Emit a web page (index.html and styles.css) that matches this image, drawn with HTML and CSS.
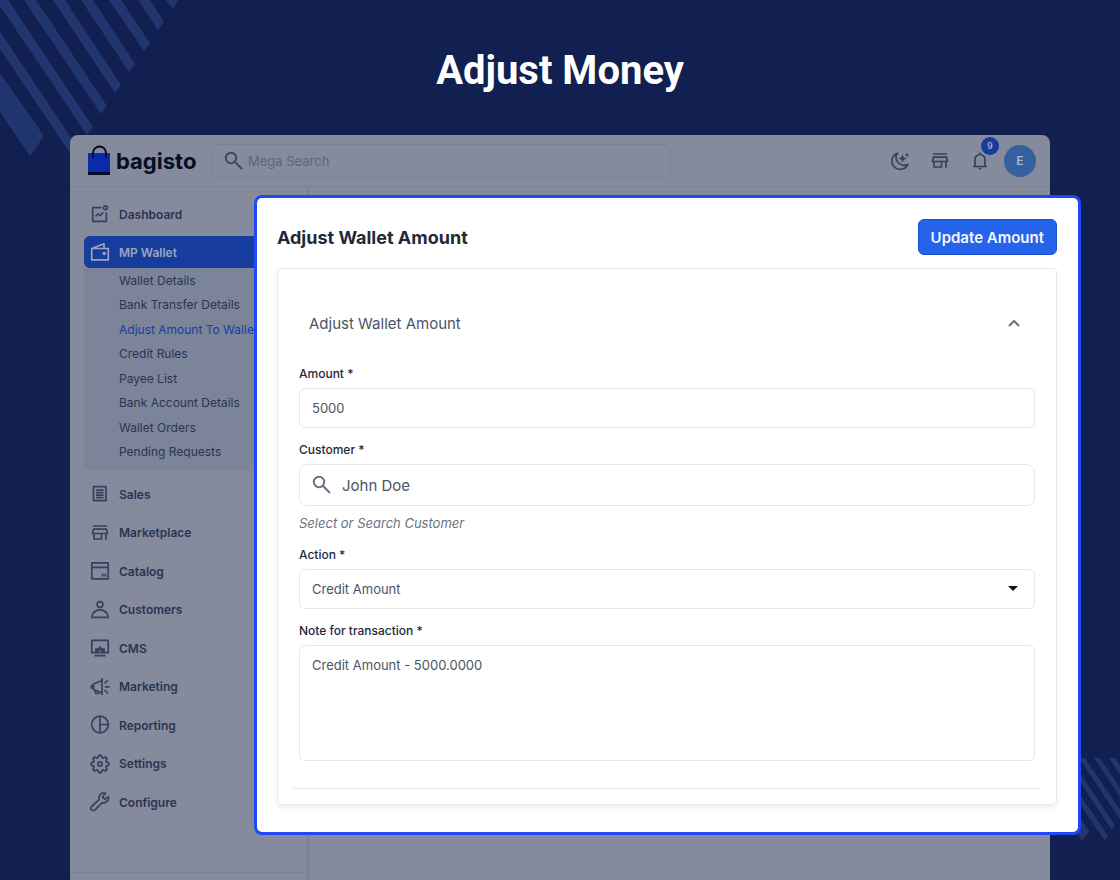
FILE: index.html
```html
<!DOCTYPE html>
<html lang="en">
<head>
    <meta charset="UTF-8">
    <meta name="viewport" content="width=device-width, initial-scale=1.0">
    <title>Adjust Money</title>
    <link rel="stylesheet" href="styles.css">
</head>
<body>
    <!-- Shared icons -->
    <svg class="sprite" aria-hidden="true">
        <symbol id="icon-search" viewBox="0 0 20 20">
            <circle cx="7" cy="7" r="5.2"/>
            <path d="M10.800 10.800L18 18"/>
        </symbol>
        <symbol id="icon-store" viewBox="0 0 22 22">
            <path d="M4 4h14M4.500 7.200h13l1 4.300h-15zM5 11.500V17h7.500v-5.500M17 11.500v6.300"/>
        </symbol>
    </svg>

    <svg class="stripes stripes-top" width="180" height="160" viewBox="0 0 180 160" aria-hidden="true">
        <path d="M0 73L44 136L30 156L0 112z"/>
        <path d="M-33 0h12L78 148L72 156z"/>
        <path d="M-4 0h12L93 127L87 135z"/>
        <path d="M24 0h12L107 106L101 114z"/>
        <path d="M53 0h12L121 85L115 93z"/>
        <path d="M81 0h12L135 64L129 72z"/>
        <path d="M109 0h12L150 43L144 51z"/>
        <path d="M138 0h12L164 22L158 30z"/>
        <path d="M166 0h12L173 9z"/>
    </svg>
    <svg class="stripes stripes-bottom" width="50" height="84" viewBox="0 0 50 84" aria-hidden="true">
        <path d="M0 44L19 73L12 83L0 66z"/>
        <path d="M-21 0h6L38 78L35 83z"/>
        <path d="M-6 0h6L45 67L42 72z"/>
        <path d="M9 0h6L52 55L49 60z"/>
        <path d="M24 0h6L58 42v9z"/>
        <path d="M39 0h6L58 19v9z"/>
    </svg>

    <h1 class="page-title">Adjust Money</h1>

    <div class="window">
        <header class="topbar">
            <a href="#" class="logo">
                <svg width="24" height="32" viewBox="0 0 24 32" aria-hidden="true">
                    <path fill="#0a2aa8" d="M0 8h22v19H0z"/>
                    <path fill="#050d24" d="M0 27h22v3H0z"/>
                    <path fill="none" stroke="#050d24" stroke-width="2" stroke-linecap="round" d="M5 12V8a6.500 6.500 0 0 1 13 0v4"/>
                </svg>
                <span>bagisto</span>
            </a>
            <label class="mega-search">
                <svg class="icon"><use href="#icon-search"/></svg>
                <input type="text" placeholder="Mega Search" aria-label="Mega Search">
            </label>
            <div class="tools">
                <button class="tool" aria-label="Dark mode">
                    <svg class="icon" viewBox="0 0 22 22">
                        <path d="M8.500 3.200A8.300 8.300 0 1 0 18.800 14.300A7.800 7.800 0 0 1 8.500 3.200z"/>
                        <path class="solid" d="M13.500 4.500l1.300 2.700l2.700 1.300l-2.700 1.300l-1.300 2.700l-1.300-2.700l-2.700-1.300l2.700-1.300zM18 2.800l.7 1.500l1.500.7l-1.500.7l-.7 1.500l-.7-1.500l-1.500-.7l1.500-.7z"/>
                    </svg>
                </button>
                <button class="tool" aria-label="Visit shop">
                    <svg class="icon"><use href="#icon-store"/></svg>
                </button>
                <button class="tool" aria-label="Notifications">
                    <svg class="icon" viewBox="0 0 22 22">
                        <path d="M4 16.500h14M6 16.500V9.500a5 5 0 0 1 10 0v7M11 4.500V2.500"/>
                        <path class="solid" d="M9.300 17.800h3.400a1.700 1.700 0 0 1-3.400 0z"/>
                    </svg>
                    <span class="badge">9</span>
                </button>
                <button class="avatar">E</button>
            </div>
        </header>

        <nav class="sidebar">
            <a href="#" class="nav-item">
                <svg class="icon" viewBox="0 0 22 22"><path d="M12.500 4.700H3.700v13.600h13.600V9.500M6.500 13.500l2.500-2.700l2.300 1.800l3-3.300"/><circle cx="16.500" cy="4.700" r="1.900"/></svg>
                Dashboard
            </a>
            <a href="#" class="nav-item active">
                <svg class="icon" viewBox="0 0 22 22"><path d="M2.700 7.500h16.600v11.300H2.700zM3.500 7.300L15 2.800v4.500"/><circle class="solid" cx="15.200" cy="12.500" r="1.700"/></svg>
                MP Wallet
            </a>
            <div class="submenu">
                <a href="#">Wallet Details</a>
                <a href="#">Bank Transfer Details</a>
                <a href="#" class="current">Adjust Amount To Wallet</a>
                <a href="#">Credit Rules</a>
                <a href="#">Payee List</a>
                <a href="#">Bank Account Details</a>
                <a href="#">Wallet Orders</a>
                <a href="#">Pending Requests</a>
            </div>
            <div class="nav-group">
                <a href="#" class="nav-item">
                    <svg class="icon" viewBox="0 0 22 22"><path d="M4.500 3.700h12.500v14H4.500zM7 7.200h7.500M7 9.700h7.500M7 12.200h7.500M7 14.700h7.500"/></svg>
                    Sales
                </a>
                <a href="#" class="nav-item">
                    <svg class="icon"><use href="#icon-store"/></svg>
                    Marketplace
                </a>
                <a href="#" class="nav-item">
                    <svg class="icon" viewBox="0 0 22 22"><path d="M2.800 2.800h16.400v16H2.800zM2.800 7.300h16.400M13.700 13.500v3M16.300 13.500v3"/></svg>
                    Catalog
                </a>
                <a href="#" class="nav-item">
                    <svg class="icon" viewBox="0 0 22 22"><circle cx="11" cy="5.500" r="2.900"/><path d="M2.800 18.300a8.200 7.500 0 0 1 16.400 0z"/></svg>
                    Customers
                </a>
                <a href="#" class="nav-item">
                    <svg class="icon" viewBox="0 0 22 22"><path d="M2.800 3.300h16.400v12.400H2.800zM5.500 18.700h11"/><path class="solid" d="M6 15v-3.500l3-.5l2-2l2 2l3 .5V15h-3.500a1.500 1.500 0 0 0-3 0z"/></svg>
                    CMS
                </a>
                <a href="#" class="nav-item">
                    <svg class="icon" viewBox="0 0 22 22"><path d="M13 2v17M13 4.500L4.500 8v5.500l8.500 3.500M5.500 14l1.500 3.500h2.500v-2M15.500 7.500L19 4M16 10.800h4.500M15.500 14L19 17.500"/><path class="solid" d="M4.800 8.200v5L1.500 12.500v-3.500z"/></svg>
                    Marketing
                </a>
                <a href="#" class="nav-item">
                    <svg class="icon" viewBox="0 0 22 22"><circle cx="11" cy="10.500" r="8.300"/><path d="M11 2.200v16.600M11 10.500h8.300"/></svg>
                    Reporting
                </a>
                <a href="#" class="nav-item">
                    <svg class="icon" viewBox="0 0 22 22"><path d="M9.700 2.300h2.600l.5 2.200l1.500.6l1.900-1.200l1.900 1.900l-1.200 1.900l.6 1.500l2.200.5v2.600l-2.200.5l-.6 1.500l1.200 1.900l-1.900 1.900l-1.900-1.200l-1.500.6l-.5 2.200H9.700l-.5-2.200l-1.500-.6l-1.900 1.200l-1.900-1.900l1.200-1.900l-.6-1.500l-2.200-.5V9.700l2.200-.5l.6-1.500l-1.200-1.900l1.900-1.900l1.900 1.200l1.500-.6z"/><circle cx="11" cy="11" r="2.200"/></svg>
                    Settings
                </a>
                <a href="#" class="nav-item">
                    <svg class="icon" viewBox="0 0 22 22"><path d="M16.500 2.300a5 5 0 0 0-6.400 6.400L2.600 15.500a2.200 2.200 0 0 0 3.400 3.300l7.200-7.200a5 5 0 0 0 6.300-6L15.800 8.300l-2.300-2.200z"/></svg>
                    Configure
                </a>
            </div>
            <div class="sidebar-footer"></div>
        </nav>

        <main class="modal">
            <div class="modal-header">
                <h2>Adjust Wallet Amount</h2>
                <button class="primary-button" type="submit" form="wallet-form">Update Amount</button>
            </div>
            <form class="card" id="wallet-form">
                <button class="accordion" type="button">
                    <span>Adjust Wallet Amount</span>
                    <svg width="12" height="8" viewBox="0 0 12 8" aria-hidden="true"><path d="M1 7l5-5l5 5"/></svg>
                </button>
                <div class="fields">
                    <div class="field">
                        <label for="amount">Amount *</label>
                        <input class="control" type="text" id="amount" value="5000">
                    </div>
                    <div class="field">
                        <label for="customer">Customer *</label>
                        <div class="search-control">
                            <svg class="icon" aria-hidden="true"><use href="#icon-search"/></svg>
                            <input type="text" id="customer" value="John Doe">
                        </div>
                        <p class="hint">Select or Search Customer</p>
                    </div>
                    <div class="field">
                        <label for="action">Action *</label>
                        <div class="select-wrap">
                            <select class="control" id="action">
                                <option>Credit Amount</option>
                                <option>Debit Amount</option>
                            </select>
                            <span class="caret"></span>
                        </div>
                    </div>
                    <div class="field">
                        <label for="note">Note for transaction *</label>
                        <textarea class="control" id="note">Credit Amount - 5000.0000</textarea>
                    </div>
                </div>
                <hr>
            </form>
        </main>
    </div>
</body>
</html>
```

FILE: styles.css
```css
* {
    margin: 0;
    padding: 0;
    box-sizing: border-box;
}

body {
    position: relative;
    display: flex;
    flex-direction: column;
    min-height: 100vh;
    background: #112050;
    font-family: Inter, 'Liberation Sans', sans-serif;
    font-size: 13px;
    color: #1f2937;
    overflow-x: hidden;
}

a {
    color: inherit;
    text-decoration: none;
}

button, input, select, textarea {
    font: inherit;
    color: inherit;
    background: none;
    border: 0;
    outline: 0;
}

button {
    cursor: pointer;
}

.sprite {
    position: absolute;
    width: 0;
    height: 0;
}

.icon {
    flex: none;
    width: 22px;
    height: 22px;
    fill: none;
    stroke: currentColor;
    stroke-width: 1.7;
    stroke-linejoin: round;
}

.icon .solid {
    fill: currentColor;
    stroke: none;
}

/* Background */
.stripes {
    position: absolute;
    fill: #21366f;
}

.stripes-top {
    top: 0;
    left: 0;
}

.stripes-bottom {
    right: 0;
    bottom: 38px;
}

.page-title {
    padding: 41px 16px 34px;
    font-family: Roboto, sans-serif;
    font-size: 40px;
    line-height: 60px;
    font-weight: 700;
    text-align: center;
    color: #fff;
}

/* Window */
.window {
    position: relative;
    display: flex;
    flex-direction: column;
    flex: 1;
    margin: 0 70px;
    background: #858a9d;
    border-radius: 8px 8px 0 0;
}

.topbar {
    display: flex;
    align-items: center;
    height: 52px;
    padding: 0 14px 0 18px;
    border-bottom: 1px solid #7b8297;
}

.logo {
    display: flex;
    align-items: center;
    gap: 4px;
    width: 124px;
    font-size: 22px;
    font-weight: 700;
    color: #050d24;
}

.mega-search {
    display: flex;
    align-items: center;
    gap: 4px;
    flex: 0 1 459px;
    height: 34px;
    padding: 0 11px;
    border: 1px solid #7b8297;
    border-radius: 7px;
    color: #3d4966;
}

.mega-search .icon,
.search-control .icon {
    width: 20px;
    height: 20px;
    stroke-width: 2;
}

.mega-search input {
    flex: 1;
    min-width: 0;
    font-size: 13px;
}

.mega-search input::placeholder {
    color: #5c6580;
}

.tools {
    display: flex;
    align-items: center;
    gap: 18px;
    margin-left: auto;
    color: #35415e;
}

.tool {
    position: relative;
    height: 22px;
}

.badge {
    position: absolute;
    top: -13px;
    right: -8px;
    width: 18px;
    height: 18px;
    border-radius: 50%;
    background: #163c9e;
    color: #a5abbf;
    font-size: 9px;
    line-height: 18px;
    font-weight: 600;
}

.avatar {
    width: 32px;
    height: 32px;
    margin-left: -5px;
    border-radius: 50%;
    background: #35609f;
    color: #a5b4cf;
    font-size: 12px;
    font-weight: 600;
}

/* Sidebar */
.sidebar {
    display: flex;
    flex-direction: column;
    flex: 1;
    width: 240px;
    padding-top: 11px;
    border-right: 3px solid #7d8398;
    font-size: 12px;
    color: #2a3553;
}

.nav-item {
    display: flex;
    align-items: center;
    gap: 8px;
    height: 32px;
    margin: 0 14px;
    padding: 0 5px;
    font-weight: 600;
}

.nav-item .icon {
    color: #35415e;
}

.nav-item.active {
    margin-top: 6px;
    border-radius: 6px;
    background: #163c9e;
    color: #9da4bb;
}

.nav-item.active .icon {
    color: #9da4bb;
}

.submenu {
    display: grid;
    grid-auto-rows: 1fr;
    align-items: center;
    height: 203px;
    margin: 0 14px;
    padding: 0 0 7px 35px;
    border-radius: 0 0 6px 6px;
    background: #7c849a;
    white-space: nowrap;
}

.submenu .current {
    color: #163c9e;
}

.nav-group {
    display: flex;
    flex-direction: column;
    justify-content: space-between;
    height: 340px;
    margin-top: 7px;
}

.sidebar-footer {
    height: 8px;
    margin-top: auto;
    border-top: 1px solid #7b8297;
}

/* Modal */
.modal {
    position: absolute;
    top: 60px;
    left: 184px;
    right: -31px;
    padding: 21px 21px 27px 20px;
    border: 3px solid #2148f5;
    border-radius: 8px;
    background: #fff;
}

.modal-header {
    display: flex;
    align-items: center;
    justify-content: space-between;
    margin-bottom: 13px;
}

.modal-header h2 {
    font-size: 18px;
    font-weight: 700;
}

.primary-button {
    height: 36px;
    padding: 0 12px;
    border: 1px solid #1d4fd0;
    border-radius: 6px;
    background: #2563eb;
    color: #f5f7fd;
    font-size: 15px;
    font-weight: 600;
}

.card {
    padding: 38px 15px 15px;
    border: 1px solid #e8e9ec;
    border-radius: 4px;
    box-shadow: 0 4px 6px rgba(0, 0, 0, 0.06);
}

.accordion {
    display: flex;
    align-items: center;
    justify-content: space-between;
    width: 100%;
    height: 32px;
    margin-bottom: 26px;
    padding: 0 21px 0 16px;
    font-size: 15px;
    color: #4b5563;
}

.accordion svg {
    fill: none;
    stroke: #6b7280;
    stroke-width: 2;
}

.fields {
    display: flex;
    flex-direction: column;
    gap: 13px;
    padding: 0 6px;
}

.field label {
    display: block;
    margin-bottom: 5px;
    font-size: 12px;
    line-height: 18px;
    font-weight: 500;
}

.control {
    display: block;
    width: 100%;
    height: 40px;
    padding: 0 12px;
    border: 1px solid #e5e7eb;
    border-radius: 6px;
    font-size: 13px;
    color: #4b5563;
}

textarea.control {
    height: 116px;
    padding: 9px 12px;
    line-height: 20px;
    resize: none;
}

.search-control {
    display: flex;
    align-items: center;
    gap: 10px;
    height: 42px;
    padding: 0 12px;
    border: 1px solid #e5e7eb;
    border-radius: 8px;
    color: #4b5563;
}

.search-control .icon {
    stroke: #6b7280;
}

.search-control input {
    flex: 1;
    min-width: 0;
    font-size: 15px;
}

.hint {
    margin-top: 7px;
    font-size: 13px;
    line-height: 20px;
    font-style: italic;
    color: #6b7280;
}

.select-wrap {
    position: relative;
}

.select-wrap select {
    appearance: none;
}

.caret {
    position: absolute;
    top: 17px;
    right: 17px;
    border: 5px solid transparent;
    border-top-color: #111;
    border-bottom: 0;
    pointer-events: none;
}

hr {
    height: 1px;
    margin-top: 27px;
    border: 0;
    background: #e5e7eb;
}
```
